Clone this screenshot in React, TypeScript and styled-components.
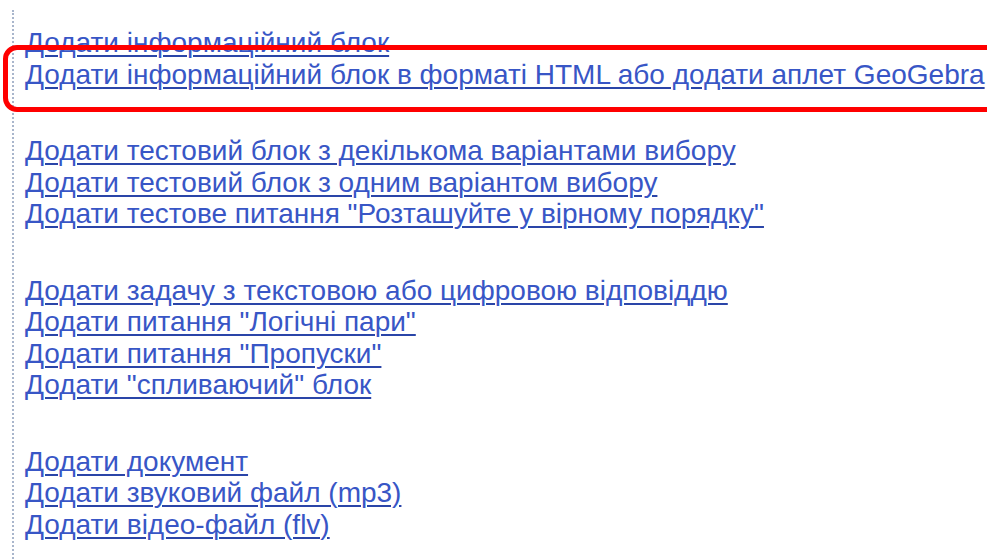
import React, { FC } from 'react';
import styled, { createGlobalStyle } from 'styled-components';

const GlobalStyle = createGlobalStyle`
	html, body {
		margin: 0;
		padding: 0;
		background: #ffffff;
	}
	body {
		width: 987px;
		height: 559px;
		overflow: hidden;
		font-family: 'Liberation Sans', Arial, sans-serif;
	}
`;

const groups: string[][] = [
	[
		'Додати інформаційний блок',
		'Додати інформаційний блок в форматі HTML або додати аплет GeoGebra',
	],
	[
		'Додати тестовий блок з декількома варіантами вибору',
		'Додати тестовий блок з одним варіантом вибору',
		'Додати тестове питання "Розташуйте у вірному порядку"',
	],
	[
		'Додати задачу з текстовою або цифровою відповіддю',
		'Додати питання "Логічні пари"',
		'Додати питання "Пропуски"',
		'Додати "спливаючий" блок',
	],
	[
		'Додати документ',
		'Додати звуковий файл (mp3)',
		'Додати відео-файл (flv)',
	],
];

const App: FC = () => {
	return (
		<>
			<GlobalStyle />
			<Page>
				<Panel>
					<Viewport>
						<LinkList>
							{groups.map((group, i) => (
								<Group key={i}>
									{group.map((label) => (
										<LinkRow key={label}>
											<Link href="#" onClick={(e) => e.preventDefault()}>
												{label}
											</Link>
										</LinkRow>
									))}
								</Group>
							))}
						</LinkList>
					</Viewport>
				</Panel>
				<Highlight />
			</Page>
		</>
	);
};

const Page = styled.div`
	position: relative;
	width: 987px;
	height: 559px;
	overflow: hidden;
	background: #ffffff;
`;

const Panel = styled.div`
	margin: 10px 0 0 12px;
	height: 549px;
	border-left: 2px dotted #a9b6cc;
	padding-top: 21px;
	box-sizing: border-box;
`;

const Viewport = styled.div`
	height: 100%;
	overflow: hidden;
`;

const LinkList = styled.div`
	margin-top: -4px;
	padding-left: 11px;
	display: flex;
	flex-direction: column;
	gap: 45px;
`;

const Group = styled.div`
	display: flex;
	flex-direction: column;
`;

const LinkRow = styled.div`
	height: 31.5px;
	line-height: 31.5px;
	white-space: nowrap;
`;

const Link = styled.a`
	font-size: 28px;
	color: #3856c6;
	text-decoration: underline;
	text-decoration-color: #2a45a8;
	text-decoration-thickness: 2px;
	text-underline-offset: 3px;
`;

const Highlight = styled.div`
	position: absolute;
	left: 3px;
	top: 45px;
	width: 1000px;
	height: 67px;
	border: 5px solid #ff0000;
	border-radius: 14px;
	box-sizing: border-box;
	pointer-events: none;
`;

export default App;
